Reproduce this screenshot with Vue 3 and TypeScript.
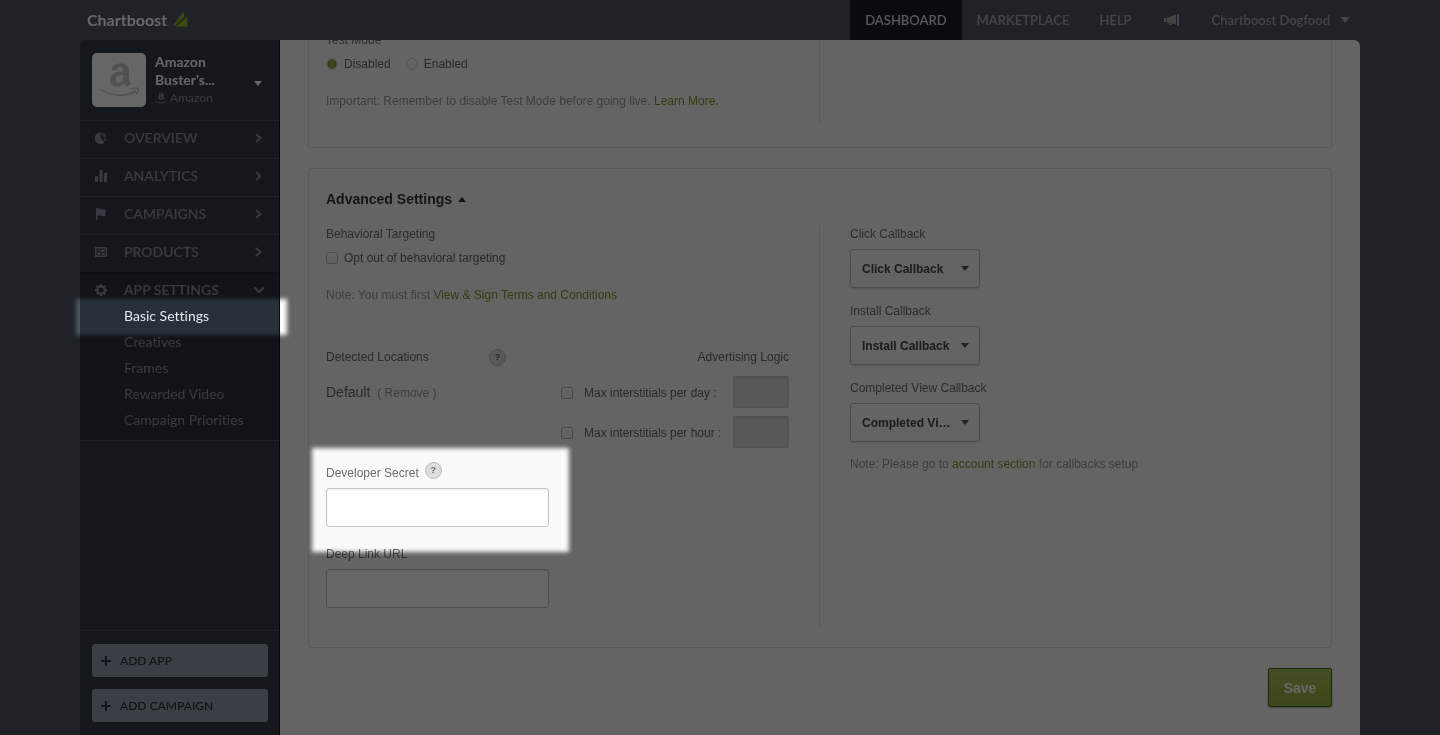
<script setup lang="ts">
import { ref } from 'vue'

interface MenuItem { label: string; icon: string }
interface Callback { id: string; label: string }

const menu: MenuItem[] = [
  { label: 'OVERVIEW', icon: 'pie' },
  { label: 'ANALYTICS', icon: 'bars' },
  { label: 'CAMPAIGNS', icon: 'flag' },
  { label: 'PRODUCTS', icon: 'box' },
]
const settings: string[] = ['Basic Settings', 'Creatives', 'Frames', 'Rewarded Video', 'Campaign Priorities']
const current = ref('Basic Settings')
const callbacks: Callback[] = [
  { id: 'click', label: 'Click Callback' },
  { id: 'install', label: 'Install Callback' },
  { id: 'view', label: 'Completed View Callback' },
]
const testMode = ref('disabled')
const optOut = ref(false)
const limits = ref([
  { id: 'day', on: false },
  { id: 'hour', on: false },
])
const secret = ref('')
const deepLink = ref('')
</script>

<template>
  <div class="page">
    <header class="topbar">
      <a class="logo" href="#">
        Chartboost
        <svg width="15" height="17" viewBox="0 0 15 17" aria-hidden="true">
          <path d="M0 13.500 10.500 0 11.500 4.500 1.500 14z" />
          <path d="M3 14.500 14.500 4.500v10z" />
        </svg>
      </a>
      <nav class="topnav">
        <a class="active" href="#">DASHBOARD</a>
        <a href="#">MARKETPLACE</a>
        <a href="#">HELP</a>
        <a class="news" href="#" aria-label="News">
          <svg width="18" height="14" viewBox="0 0 18 14">
            <path d="M1 5h2v4H1zM3.500 5 13 1.500v10L3.500 9zM14 1h2v12h-2z" />
            <path d="M5 9l1.500 2.500 2.500-.5-.500-1" fill="none" stroke="currentColor" />
          </svg>
        </a>
        <a class="account" href="#">Chartboost Dogfood <i class="caret" /></a>
      </nav>
    </header>

    <div class="frame">
      <aside class="sidebar">
        <button class="app" type="button">
          <span class="appicon">
            <svg width="54" height="54" viewBox="0 0 54 54">
              <path d="M19.500 17c.5-4 4-6.500 9-6.500 5.500 0 8.500 2.500 8.500 7.500v8c0 2.500 1 3.500 2 4.500l-4 3.500c-1.500-1-2.500-2.500-3-3.500-4.500 5-14 4-14-3.500 0-7 6.500-8.500 13-8.500 0-3-.5-4.500-3-4.500-2 0-3 1.200-3.500 3.500zM31 22c-4 0-7 1-7 4.500 0 5 7 4 7-2z" />
              <path d="M8 36c12 8 26 8 36 2M39.500 36c3-1.500 6-1 6.500-.5s0 3.500-2 6" fill="none" stroke="currentColor" stroke-width="1.500" />
            </svg>
          </span>
          <span class="appinfo">
            <strong>Amazon</strong>
            <strong>Buster's...</strong>
            <small>
              <svg width="12" height="12" viewBox="0 0 54 54">
                <path d="M17 13c1-7 5-10 12-10s10 3 10 9v10c0 4 1 5 3 7l-5 5c-3-1-4-3-5-5-5 7-17 5-17-4 0-8 7-11 16-11 0-4-1-6-4-6s-4 2-5 5zM31 20c-5 0-8 1-8 5 0 5 8 4 8-2z" />
                <path d="M2 42c14 10 34 10 50 0" fill="none" stroke="currentColor" stroke-width="4" />
              </svg>
              Amazon
            </small>
          </span>
          <i class="caret" />
        </button>

        <nav class="menu">
          <a v-for="m in menu" :key="m.label" class="row" href="#">
            <svg class="ico" width="12" height="12" viewBox="0 0 12 12">
              <template v-if="m.icon === 'pie'">
                <path d="M5.500.5v5.700l4 4A5.700 5.700 0 1 1 5.500.5z" />
                <path d="M6.700.5A5.500 5.500 0 0 1 11.500 5l-2 .500L8 4 6.700 5zM8 6.200h3.500a5 5 0 0 1-1.300 3.300z" opacity=".65" />
              </template>
              <path v-else-if="m.icon === 'bars'" d="M0 6h3v6H0zM4.500 0h3v12h-3zM9 3h3v9H9z" />
              <path v-else-if="m.icon === 'flag'" d="M1 0h1.500v1C5-.5 6 2.500 10.500 1v7C7 9 5.500 6.500 2.500 8v4H1z" />
              <path v-else fill-rule="evenodd" d="M0 1h12v10H0zM1.500 2.500v7h9v-7zM2.500 6h3v3h-3zM6 3.500h3.500V6H6zM7 7h2.500v2H7zM3 3.500h2V5H3z" />
            </svg>
            <span>{{ m.label }}</span>
            <svg class="chev" width="8" height="10" viewBox="0 0 8 10"><path d="M1 1l4.500 4L1 9" /></svg>
          </a>
          <div class="open">
            <a class="row" href="#">
              <svg class="ico" width="12" height="12" viewBox="0 0 12 12">
                <path fill-rule="evenodd" d="M5 0h2l.3 1.600 1 .4L9.700 1 11 2.300l-.9 1.400.4 1L12 5v2l-1.500.3-.4 1 .9 1.400L9.700 11l-1.400-.9-1 .4L7 12H5l-.3-1.500-1-.4-1.400.9L1 9.700l.9-1.400-.4-1L0 7V5l1.500-.3.4-1L1 2.300 2.300 1l1.400 1 1-.4zM6 3.500a2.500 2.500 0 1 0 0 5 2.500 2.500 0 0 0 0-5z" />
              </svg>
              <span>APP SETTINGS</span>
              <svg class="chev" width="10" height="8" viewBox="0 0 10 8"><path d="M.5 1.500l4.500 4.500 4.500-4.500" /></svg>
            </a>
            <a v-for="s in settings" :key="s" class="sub" :class="{ on: s === current }" href="#" @click.prevent="current = s">{{ s }}</a>
          </div>
        </nav>

        <div class="actions">
          <button type="button"><svg width="10" height="10" viewBox="0 0 10 10"><path d="M4 0h2v4h4v2H6v4H4V6H0V4h4z" /></svg>ADD APP</button>
          <button type="button"><svg width="10" height="10" viewBox="0 0 10 10"><path d="M4 0h2v4h4v2H6v4H4V6H0V4h4z" /></svg>ADD CAMPAIGN</button>
        </div>
      </aside>

      <main class="content">
        <section class="panel first">
          <div class="cols">
            <div class="left">
              <div class="label">Test Mode</div>
              <div class="choice radios">
                <label><input v-model="testMode" type="radio" name="test" value="disabled">Disabled</label>
                <label><input v-model="testMode" type="radio" name="test" value="enabled">Enabled</label>
              </div>
              <p class="note">Important: Remember to disable Test Mode before going live. <a href="#">Learn More.</a></p>
            </div>
            <div class="right" />
          </div>
        </section>

        <section class="panel">
          <h2>Advanced Settings <i class="caret up" /></h2>
          <div class="cols">
            <div class="left">
              <div class="label">Behavioral Targeting</div>
              <div class="choice">
                <label><input v-model="optOut" type="checkbox">Opt out of behavioral targeting</label>
              </div>
              <p class="note">Note: You must first <a href="#">View &amp; Sign Terms and Conditions</a></p>
              <div class="lochead">
                <span class="detected">Detected Locations</span>
                <button class="help" type="button">?</button>
                <span class="logic">Advertising Logic</span>
              </div>
              <div class="location">
                <div class="name">Default <button type="button">( Remove )</button></div>
                <div class="limits">
                  <div v-for="l in limits" :key="l.id" class="limit">
                    <label><input v-model="l.on" type="checkbox">Max interstitials per {{ l.id }} :</label>
                    <input class="num" type="text" :disabled="!l.on" :aria-label="'Limit per ' + l.id">
                  </div>
                </div>
              </div>
              <div class="label secret"><label for="secret">Developer Secret</label><button class="help" type="button">?</button></div>
              <input id="secret" v-model="secret" class="field" type="text">
              <div class="label deep"><label for="deep">Deep Link URL</label></div>
              <input id="deep" v-model="deepLink" class="field" type="text">
            </div>
            <div class="right">
              <div v-for="c in callbacks" :key="c.id" class="callback">
                <label class="label" :for="c.id">{{ c.label }}</label>
                <div class="picker">
                  <select :id="c.id"><option>{{ c.label }}</option></select>
                  <i class="caret" />
                </div>
              </div>
              <p class="note setup">Note: Please go to <a href="#">account section</a> for callbacks setup</p>
            </div>
          </div>
        </section>
        <div class="foot"><button class="save" type="button">Save</button></div>
      </main>
    </div>

    <div class="dim" aria-hidden="true">
      <div class="spot nav-spot" />
      <div class="spot secret-spot" />
    </div>
  </div>
</template>

<style>
body { margin: 0; background: #4d5761; }
</style>

<style scoped>
* { box-sizing: border-box; }
.page {
  position: relative;
  display: flex;
  flex-direction: column;
  min-height: 100vh;
  background: #4d5761;
  font: 12px/18px "Liberation Sans", Arial, sans-serif;
  color: #666;
  isolation: isolate;
}
a { color: inherit; text-decoration: none; }
button { font: inherit; color: inherit; border: 0; background: none; padding: 0; cursor: pointer; }
svg { fill: currentColor; flex: none; }
.caret {
  width: 0;
  height: 0;
  flex: none;
  border: 4px solid transparent;
  border-top: 5px solid currentColor;
  border-bottom: 0;
}
.topbar {
  display: flex;
  justify-content: space-between;
  height: 40px;
  padding: 0 80px;
  font-family: Lato, sans-serif;
}
.logo { display: flex; align-items: center; gap: 6px; padding-left: 7px; font-size: 16px; font-weight: 700; color: #fff; }
.logo svg { color: #93c01f; }
.topnav { display: flex; font-size: 13px; font-weight: 600; color: #aaa; }
.topnav a { display: flex; align-items: center; padding: 0 15px; }
.topnav .active { background: #141e26; color: #ddd; }
.topnav .account { gap: 10px; padding-right: 10px; }
.topnav .account .caret { border-width: 6px 5px 0; }
.topnav .news { padding: 0 16px; }

.frame { flex: 1; display: flex; margin: 0 80px; border-radius: 6px 6px 0 0; overflow: hidden; }
.sidebar {
  width: 200px;
  flex: none;
  display: flex;
  flex-direction: column;
  background: #323c44;
  border-right: 1px solid #0a0c0e;
  font-family: Lato, sans-serif;
  font-variant-ligatures: none;
  color: #8a93a2;
}
.app { display: flex; align-items: center; height: 80px; padding: 0 17px 0 12px; text-align: left; }
.appicon { width: 54px; height: 54px; border-radius: 5px; background: #fff; color: #cacaca; margin-right: 9px; }
.appicon svg { display: block; }
.appinfo { flex: 1; display: flex; flex-direction: column; }
.appinfo strong { font-size: 14px; color: #fff; }
.appinfo small { display: flex; align-items: center; gap: 3px; font-size: 12px; }
.app > .caret { color: #fff; margin-top: 6px; }
.row {
  display: flex;
  align-items: center;
  padding: 8px 16px 11px 15px;
  border-top: 1px solid #48525b;
  font-size: 14px;
  font-weight: 600;
}
.row .ico { margin-right: 17px; }
.row span { flex: 1; }
.chev { fill: none; stroke: currentColor; stroke-width: 2; }
.open { background: #28303a; padding-bottom: 7px; border-bottom: 1px solid #48525b; }
.open .row { border-top-color: #20262c; padding-right: 15px; padding-bottom: 4px; }
.sub { display: block; padding-left: 44px; font-size: 14px; line-height: 26px; }
.sub.on { color: #e4e8ee; }
.actions { display: grid; gap: 12px; margin-top: auto; padding: 13px 11px 13px 12px; border-top: 1px solid #48525b; }
.actions button {
  display: flex;
  align-items: center;
  gap: 9px;
  height: 33px;
  padding: 0 9px;
  border-radius: 3px;
  background: #8f9cac;
  color: #2c343c;
  font-size: 12px;
  font-weight: 600;
}

.content { flex: 1; min-width: 0; padding: 0 28px 28px; background: #fafafa; }
.panel { border: 1px solid #dfdfdf; border-radius: 2px; padding: 21px 0 20px; margin-bottom: 20px; }
.panel.first { margin-top: -20px; padding: 10px 0 22px; }
.panel h2 { display: flex; align-items: center; gap: 6px; margin: 0 17px 17px; font-size: 14px; line-height: 18px; color: #333; }
.caret.up { border-top: 0; border-bottom: 5px solid currentColor; }
.cols { display: grid; grid-template-columns: 1fr 1fr; }
.left { padding: 0 30px 19px 17px; border-right: 1px solid #dfdfdf; }
.first .left { padding-bottom: 15px; }
.right { padding-left: 30px; }
.label { display: block; margin-bottom: 6px; color: #6c6c6c; }
.choice { display: flex; gap: 15px; }
.choice label, .limit label { display: flex; align-items: center; gap: 6px; }
.note { margin: 19px 0 0; color: #999; }
.note a { color: #7a9a2a; }
input[type="checkbox"], input[type="radio"] {
  appearance: none;
  width: 12px;
  height: 12px;
  margin: 0;
  flex: none;
  border: 1px solid #bbb;
  border-radius: 2px;
  background: linear-gradient(#fff, #eee);
}
input[type="radio"] { border-radius: 50%; border-color: #ccc; }
input[type="radio"]:checked { background: radial-gradient(#8cb43c 0 3px, #66852b 4px, #eee 5px); }
input[type="checkbox"]:checked { background: #8cb43c; }
.help {
  width: 17px;
  height: 17px;
  border: 1px solid #bbb;
  border-radius: 50%;
  background: #ddd;
  color: #666;
  font-size: 9px;
  font-weight: 700;
  line-height: 15px;
}
.lochead { display: flex; align-items: center; margin-top: 44px; }
.detected { width: 163px; }
.logic { margin-left: auto; }
.location { display: flex; justify-content: space-between; margin-top: 10px; }
.name { font-size: 14px; line-height: 32px; }
.name button { margin-left: 3px; font-size: 12px; color: #999; }
.limits { display: grid; gap: 8px; }
.limit { display: flex; }
.limit label { width: 172px; gap: 11px; padding-top: 2px; }
.num { width: 56px; height: 32px; border: 1px solid #ccc; border-radius: 2px; background: #dcdcdc; box-shadow: inset 0 1px 2px #c4c4c4; }
.secret { display: flex; align-items: center; gap: 6px; height: 18px; margin-top: 16px; }
.secret .help { margin-bottom: 5px; }
.deep { margin-top: 18px; }
.field {
  display: block;
  width: 223px;
  height: 39px;
  padding: 0 10px;
  border: 1px solid #c4c4c4;
  border-radius: 3px;
  background: #fff;
  box-shadow: inset 0 1px 2px #eee;
  font: inherit;
}
.callback { margin-bottom: 14px; }
.callback:nth-last-child(2) { margin-bottom: 13px; }
.picker { position: relative; width: 130px; }
.picker select {
  appearance: none;
  display: block;
  width: 100%;
  height: 39px;
  padding: 0 28px 0 11px;
  border: 1px solid #c0c0c0;
  border-radius: 3px;
  background: linear-gradient(#fdfdfd, #f6f6f6);
  box-shadow: 0 1px 2px #ddd;
  font: bold 12px "Liberation Sans", Arial, sans-serif;
  color: #444;
  text-overflow: ellipsis;
}
.picker .caret { position: absolute; right: 11px; top: 17px; color: #555; pointer-events: none; }
.note.setup { margin-top: 13px; }
.foot { display: flex; justify-content: flex-end; }
.save {
  width: 64px;
  height: 39px;
  border: 1px solid #4d6318;
  border-radius: 2px;
  background: linear-gradient(#a9c557, #93b03c);
  box-shadow: 0 1px 2px #aaa;
  color: #fff;
  font-size: 14px;
  font-weight: 700;
}

/* Dimming layer: grey multiplies the page down, white spots leave it lit. */
.dim { position: absolute; inset: 0; overflow: hidden; background: #666; mix-blend-mode: multiply; pointer-events: none; }
.spot { position: absolute; background: #fff; filter: blur(2px); }
.nav-spot { left: 76px; top: 299px; width: 211px; height: 36px; }
.secret-spot { left: 312px; top: 448px; width: 257px; height: 104px; }
</style>
